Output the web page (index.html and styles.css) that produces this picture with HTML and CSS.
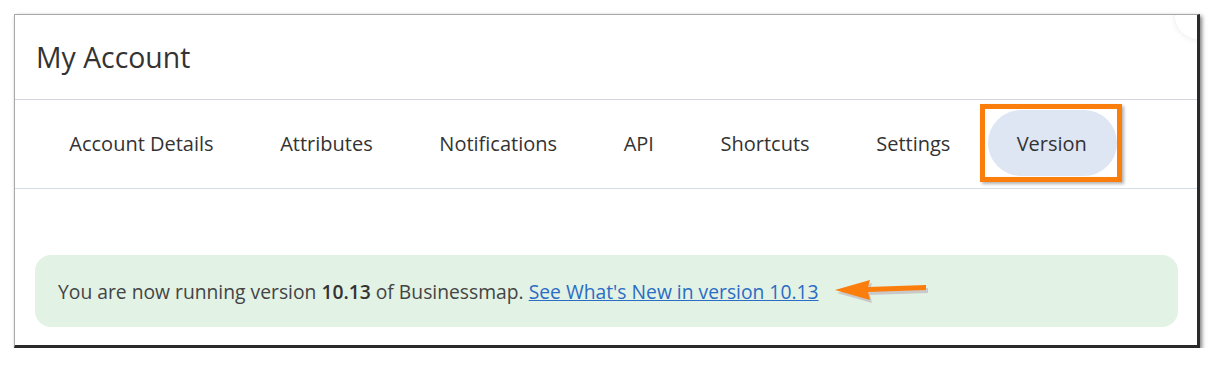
FILE: index.html
```html
<!DOCTYPE html>
<html lang="en">
<head>
    <meta charset="UTF-8">
    <title>My Account - Version</title>
    <link rel="stylesheet" href="styles.css">
</head>
<body>
    <div class="panel">
        <span class="close-btn"></span>

        <div class="panel-header">
            <h1>My Account</h1>
        </div>

        <nav class="tabs">
            <a class="tab">Account Details</a>
            <a class="tab">Attributes</a>
            <a class="tab">Notifications</a>
            <a class="tab">API</a>
            <a class="tab">Shortcuts</a>
            <a class="tab">Settings</a>
            <a class="tab active">Version</a>
        </nav>

        <div class="panel-body">
            <div class="version-note">
                <span>You are now running version <b>10.13</b> of Businessmap.</span>
                <a href="#" class="note-link">See What's New in version 10.13</a>
                <!-- annotation arrow -->
                <svg class="arrow" width="96" height="26" viewBox="0 0 96 26">
                    <path d="M2 11 L37 1 L35 8 L93 6 L93 11 L35 13 L37 21 Z" fill="#c9c9c9" transform="translate(2 3)"/>
                    <path d="M2 11 L37 1 L35 8 L93 6 L93 11 L35 13 L37 21 Z" fill="#fb7d0c"/>
                </svg>
            </div>
        </div>
    </div>
</body>
</html>
```

FILE: styles.css
```css
body {
    margin: 0;
    padding: 14px 0 0 14px;
    background: #fff;
    font-family: "Open Sans", Arial, sans-serif;
    color: #333;
}

.panel {
    position: relative;
    overflow: hidden;
    width: 1186px;
    height: 334px;
    background: #fff;
    border-top: 1px solid #a8a8a8;
    border-left: 1px solid #a8a8a8;
    border-right: 3px solid #2a2a2a;
    border-bottom: 3px solid #2a2a2a;
    box-sizing: border-box;
    box-shadow: 2px 2px 4px rgba(0, 0, 0, 0.5);
}

.close-btn {
    position: absolute;
    top: -22px;
    right: -24px;
    width: 46px;
    height: 46px;
    border-radius: 50%;
    background: #fff;
    box-shadow: 0 0 6px rgba(0, 0, 0, 0.1);
}

.panel-header {
    height: 84px;
    padding-left: 21px;
    border-bottom: 1px solid #d4d8dc;
    display: flex;
    align-items: center;
}

.panel-header h1 {
    margin: 0;
    font-size: 28.4px;
    font-weight: 400;
    color: #333;
}

.tabs {
    display: flex;
    align-items: flex-start;
    height: 89px;
    padding: 10px 0 0 21px;
    box-sizing: border-box;
    border-bottom: 1px solid #d4dde6;
}

.tab {
    position: relative;
    display: flex;
    align-items: center;
    height: 66px;
    padding: 0 33.3px;
    font-size: 20px;
    color: #333;
    border-radius: 33px;
    cursor: pointer;
}

.tab.active {
    background: #dde6f2;
    padding: 0 30px 0 29px;
    margin-left: 4px;
}

/* orange annotation frame */
.tab.active::after {
    content: "";
    position: absolute;
    left: -8px;
    right: -5px;
    top: -6px;
    bottom: -6px;
    border: 5px solid #fb7d0c;
    box-shadow: 2px 2px 3px rgba(0, 0, 0, 0.3);
}

.panel-body {
    padding: 66px 19px 0 20px;
}

.version-note {
    position: relative;
    display: flex;
    align-items: center;
    height: 72px;
    padding-left: 23px;
    background: #e2f2e4;
    border-radius: 16px;
    font-size: 19.3px;
    color: #444;
}

.version-note b {
    font-weight: 600;
    color: #333;
}

.note-link {
    margin-left: 5px;
    color: #2b6cc4;
    text-decoration: underline;
}

.arrow {
    margin-left: 14px;
    margin-top: 2px;
}
```
